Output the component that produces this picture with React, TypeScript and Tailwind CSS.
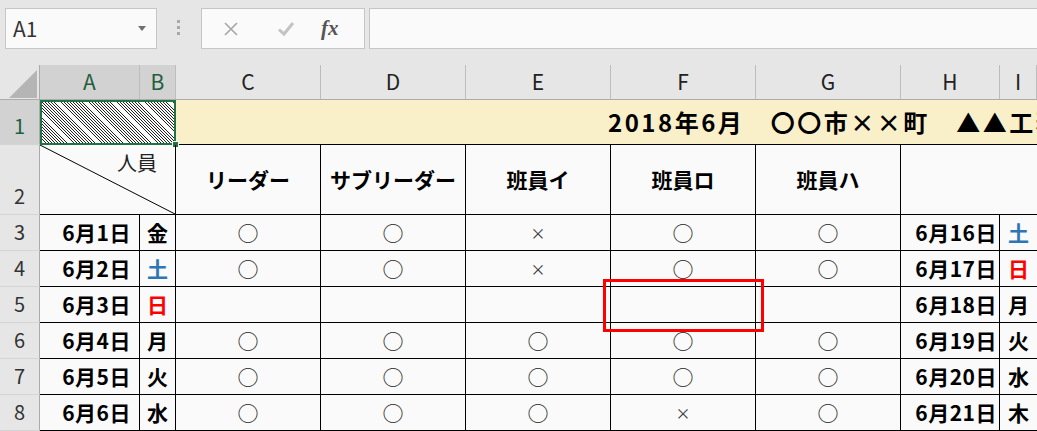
import React from 'react';

type Mark = 'o' | 'x' | '';

const rows: {
  n: number;
  date: string;
  day: string;
  dayColor: string;
  marks: Mark[];
  date2: string;
  day2: string;
  day2Color: string;
}[] = [
  { n: 3, date: '6月1日', day: '金', dayColor: 'text-black', marks: ['o', 'o', 'x', 'o', 'o'], date2: '6月16日', day2: '土', day2Color: 'text-[#2e75b6]' },
  { n: 4, date: '6月2日', day: '土', dayColor: 'text-[#2e75b6]', marks: ['o', 'o', 'x', 'o', 'o'], date2: '6月17日', day2: '日', day2Color: 'text-[#ff0000]' },
  { n: 5, date: '6月3日', day: '日', dayColor: 'text-[#ff0000]', marks: ['', '', '', '', ''], date2: '6月18日', day2: '月', day2Color: 'text-black' },
  { n: 6, date: '6月4日', day: '月', dayColor: 'text-black', marks: ['o', 'o', 'o', 'o', 'o'], date2: '6月19日', day2: '火', day2Color: 'text-black' },
  { n: 7, date: '6月5日', day: '火', dayColor: 'text-black', marks: ['o', 'o', 'o', 'o', 'o'], date2: '6月20日', day2: '水', day2Color: 'text-black' },
  { n: 8, date: '6月6日', day: '水', dayColor: 'text-black', marks: ['o', 'o', 'o', 'x', 'o'], date2: '6月21日', day2: '木', day2Color: 'text-black' }
];

const colLetters = ['A', 'B', 'C', 'D', 'E', 'F', 'G', 'H', 'I'];
const roles = ['リーダー', 'サブリーダー', '班員イ', '班員ロ', '班員ハ'];

const grid = 'grid grid-cols-[40px_100px_36px_145px_145px_145px_145px_145px_99px_37px]';

const RowHead = ({ n, selected = false }: { n: number; selected?: boolean }) => (
  <div className={`flex items-end justify-center border-r border-b border-r-[#ababab] border-b-[#d4d4d4] text-[20px] ${selected ? 'bg-[#d2d2d2] text-[#1e5e3b]' : 'bg-[#e6e6e6] text-[#333]'}`}>
    <span className="leading-[36px]">{n}</span>
  </div>
);

const MarkCell = ({ m }: { m: Mark }) => (
  <div className="flex items-center justify-center border-r border-b border-black">
    {m === 'o' && <span className="text-[21px] leading-none text-[#222]">○</span>}
    {m === 'x' && <span className="text-[15px] leading-none text-[#333]">×</span>}
  </div>
);

const App: React.FC = () => {
  return <div className="relative h-[431px] w-[1037px] overflow-hidden bg-[#e6e6e6] font-['Noto_Sans_CJK_JP',sans-serif] text-black">
      {/* formula bar */}
      <div className="flex h-[65px] items-start pt-[8px]">
        <div className="ml-[5px] flex h-[41px] w-[152px] items-center justify-between border border-[#c6c6c6] bg-[#fafafa] pl-[7px] pr-[10px]">
          <span className="text-[21px] text-[#333]">A1</span>
          <svg width="8" height="5" viewBox="0 0 8 5">
            <path d="M0 0h8L4 5z" fill="#707070" />
          </svg>
        </div>
        <div className="ml-[20px] mt-[12px] flex flex-col gap-[3px]">
          <span className="h-[3px] w-[3px] bg-[#a8a8a8]" />
          <span className="h-[3px] w-[3px] bg-[#a8a8a8]" />
          <span className="h-[3px] w-[3px] bg-[#a8a8a8]" />
        </div>
        <div className="ml-[21px] flex h-[41px] w-[164px] items-center border border-[#c6c6c6] bg-[#fafafa]">
          <svg className="ml-[21px]" width="16" height="16" viewBox="0 0 16 16">
            <path d="M2 2l12 12M14 2L2 14" stroke="#a6a6a6" strokeWidth="1.6" />
          </svg>
          <svg className="ml-[38px]" width="18" height="16" viewBox="0 0 18 16">
            <path d="M2 8.5l5 4.5 9-11" stroke="#c3c3c3" strokeWidth="3" fill="none" />
          </svg>
          <span className="ml-[26px] font-['Liberation_Serif',serif] text-[21px] font-bold italic text-[#555]">fx</span>
        </div>
        <div className="ml-[4px] h-[41px] flex-1 border border-r-0 border-[#c6c6c6] bg-[#fafafa]" />
      </div>

      {/* column headers */}
      <div className={`${grid} h-[35px] border-b border-[#ababab]`}>
        <div className="relative border-r border-[#ababab]">
          <svg className="absolute left-[9px] top-[5px]" width="28" height="28" viewBox="0 0 28 28">
            <path d="M0 28L28 0v28z" fill="#b5b5b5" />
          </svg>
        </div>
        {colLetters.map((c, i) => <div key={c} className={`flex items-center justify-center border-r border-[#bdbdbd] text-[21px] ${i < 2 ? 'bg-[#d2d2d2] text-[#1e5e3b]' : 'text-[#222]'}`}>
            {c}
          </div>)}
      </div>

      {/* sheet */}
      <div className={`${grid} grid-rows-[45px_70px_36px_36px_36px_36px_36px_36px] bg-[#fafafa]`}>
        {/* row 1 */}
        <RowHead n={1} selected />
        <div className="relative col-span-2 border-2 border-[#217346] bg-[repeating-linear-gradient(45deg,#222_0px,#222_0.7px,#fafafa_0.7px,#fafafa_2.2px)]">
          <span className="absolute -bottom-[5px] -right-[5px] h-[7px] w-[7px] border border-[#fafafa] bg-[#217346]" />
        </div>
        <div className="col-span-7 flex items-center overflow-hidden whitespace-nowrap border-b border-black bg-[#f9f0ca] pl-[432px] text-[24px] font-bold tracking-[2.5px]">
          2018年6月　〇〇市××町　▲▲工務店
        </div>

        {/* row 2 */}
        <RowHead n={2} />
        <div className="relative col-span-2 border-r border-b border-black">
          <svg className="absolute inset-0 h-full w-full" preserveAspectRatio="none" viewBox="0 0 100 100">
            <line x1="0" y1="0" x2="100" y2="100" stroke="#000" strokeWidth="1" vectorEffect="non-scaling-stroke" />
          </svg>
          <span className="absolute right-[18px] top-[8px] text-[20px] leading-none text-[#222]">人員</span>
        </div>
        {roles.map(r => <div key={r} className="flex items-center justify-center border-r border-b border-black text-[21px] font-bold">
            {r}
          </div>)}
        <div className="col-span-2 border-b border-black" />

        {/* rows 3-8 */}
        {rows.map(r => <React.Fragment key={r.n}>
            <RowHead n={r.n} />
            <div className="flex items-center justify-end border-r border-b border-black pr-[8px] text-[21px] font-bold tracking-[0.5px]">
              {r.date}
            </div>
            <div className={`flex items-center justify-center border-r border-b border-black text-[21px] font-bold ${r.dayColor}`}>
              {r.day}
            </div>
            {r.marks.map((m, i) => <MarkCell key={i} m={m} />)}
            <div className="flex items-center justify-end border-r border-b border-black pr-[2px] text-[21px] font-bold tracking-[0.5px]">
              {r.date2}
            </div>
            <div className={`flex items-center justify-center border-b border-black text-[21px] font-bold ${r.day2Color}`}>
              {r.day2}
            </div>
          </React.Fragment>)}
      </div>

      {/* highlight */}
      <div className="absolute left-[603px] top-[279px] h-[53px] w-[161px] border-[3px] border-[#ff0000]" />
    </div>;
};

export default App;
